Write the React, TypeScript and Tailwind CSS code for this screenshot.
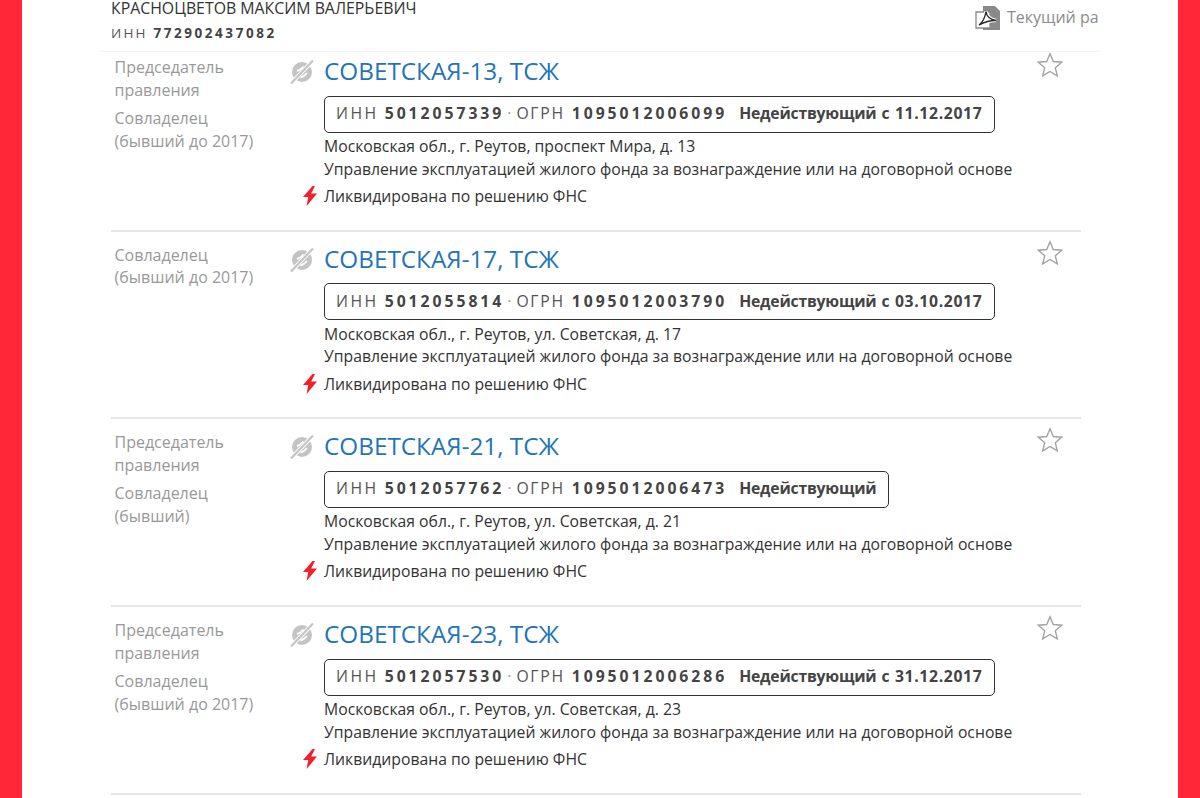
const companies = [
  {
    name: 'СОВЕТСКАЯ-13, ТСЖ',
    height: '-mt-[8px] h-[187.5px]',
    roles: [['Председатель', 'правления'], ['Совладелец', '(бывший до 2017)']],
    inn: '5012057339',
    ogrn: '1095012006099',
    date: 'с 11.12.2017',
    address: 'Московская обл., г. Реутов, проспект Мира, д. 13',
  },
  {
    name: 'СОВЕТСКАЯ-17, ТСЖ',
    height: 'h-[187.5px]',
    roles: [['Совладелец', '(бывший до 2017)']],
    inn: '5012055814',
    ogrn: '1095012003790',
    date: 'с 03.10.2017',
    address: 'Московская обл., г. Реутов, ул. Советская, д. 17',
  },
  {
    name: 'СОВЕТСКАЯ-21, ТСЖ',
    height: 'h-[188px]',
    roles: [['Председатель', 'правления'], ['Совладелец', '(бывший)']],
    inn: '5012057762',
    ogrn: '1095012006473',
    date: '',
    address: 'Московская обл., г. Реутов, ул. Советская, д. 21',
  },
  {
    name: 'СОВЕТСКАЯ-23, ТСЖ',
    height: 'h-[188px]',
    roles: [['Председатель', 'правления'], ['Совладелец', '(бывший до 2017)']],
    inn: '5012057530',
    ogrn: '1095012006286',
    date: 'с 31.12.2017',
    address: 'Московская обл., г. Реутов, ул. Советская, д. 23',
  },
]

function InactiveIcon() {
  return (
    <svg width="24" height="24" viewBox="0 0 24 24" className="shrink-0">
      <circle cx="12" cy="12" r="10" fill="#c4c4c4" />
      <path d="M7 11c2.500-.5 4.500-2 6.500-4.500M10.500 17.500c2.500-.5 4.500-2 6.500-4.500" stroke="#fff" strokeWidth="1.800" fill="none" />
      <path d="M1.500 23L22.500 1" stroke="#fff" strokeWidth="4" />
      <path d="M1 23.500L23 .5" stroke="#c4c4c4" strokeWidth="2.200" />
    </svg>
  )
}

function BoltIcon() {
  return (
    <svg width="16" height="20" viewBox="0 0 16 20" className="shrink-0">
      <path d="M10.500 0L1 11h5.200L4.600 20 15 7.600H9.200L13 0z" fill="#f0202c" />
    </svg>
  )
}

function StarIcon() {
  return (
    <svg width="26" height="25" viewBox="0 0 26 25">
      <path d="M13 1.800l3.300 7.700 8.400.7-6.400 5.500 2 8.200L13 19.500l-7.300 4.400 2-8.200-6.400-5.500 8.400-.7z" fill="none" stroke="#a3a3a3" strokeWidth="1.400" />
    </svg>
  )
}

function PdfIcon() {
  return (
    <svg width="26" height="26" viewBox="0 0 26 26" className="shrink-0">
      <path d="M8 1h12l5 5v19H8z" fill="#8a8a8a" />
      <path d="M1 7h14v16H1z" fill="#fff" stroke="#8a8a8a" strokeWidth="1.300" />
      <path d="M11 6.500c-.8 5-3.500 11-7 13.500 3-1.500 9-5 17-4.500-5.500-1-9.500-4-10-9z" fill="none" stroke="#fff" strokeWidth="3.400" />
      <path d="M11 6.500c-.8 5-3.500 11-7 13.500 3-1.500 9-5 17-4.500-5.500-1-9.500-4-10-9z" fill="none" stroke="#2b2b2b" strokeWidth="1.400" />
    </svg>
  )
}

function CompanyRow({ c }: { c: (typeof companies)[number] }) {
  return (
    <div className={`relative flex border-b-2 border-[#e6e6e6] ml-[11px] w-[970px] ${c.height}`}>
      <div className="w-[177px] shrink-0 pl-[3.5px] pt-[12px] text-[16px] leading-[22.5px] text-[#999999]">
        {c.roles.map((lines, i) => (
          <div key={i} className="mb-[6px]">
            {lines.map(l => <div key={l}>{l}</div>)}
          </div>
        ))}
      </div>
      <div className="w-[36px] shrink-0 pt-[16px] pl-[2px]">
        <InactiveIcon />
      </div>
      <div className="flex-1 min-w-0">
        <div className="pt-[9px] text-[24.3px] leading-[36px] text-[#1f75b8]">{c.name}</div>
        <div className="mt-[6.5px] inline-flex items-center h-[37px] pl-[11px] pr-[12px] border border-[#333333] rounded-[5px] text-[15.75px] text-[#555555] whitespace-nowrap">
          <span className="tracking-[2.5px]">ИНН</span>
          <b className="ml-[6px] tracking-[2.95px] font-bold text-[#444444]">{c.inn}</b>
          <span className="ml-[3px] mr-[5px] text-[#999999]">·</span>
          <span className="tracking-[1.7px]">ОГРН</span>
          <b className="ml-[7px] tracking-[2.95px] font-bold text-[#444444]">{c.ogrn}</b>
          <b className="ml-[12px] tracking-[-0.22px] font-bold text-[#444444]">Недействующий</b>
          {c.date && <b className="ml-[5px] tracking-[0.64px] font-bold text-[#444444]">{c.date}</b>}
        </div>
        <div className="mt-[2.5px] text-[15.75px] leading-[22.5px] text-[#333333]">{c.address}</div>
        <div className="text-[15.75px] leading-[22.5px] text-[#333333] whitespace-nowrap">Управление эксплуатацией жилого фонда за вознаграждение или на договорной основе</div>
        <div className="relative mt-[5px] text-[15.75px] leading-[22.5px] text-[#333333]">
          <span className="absolute -left-[22px] top-[1px]"><BoltIcon /></span>
          Ликвидирована по решению ФНС
        </div>
      </div>
      <div className="absolute right-[18px] top-[8px]"><StarIcon /></div>
    </div>
  )
}

export default function App() {
  return (
    <div className="h-[798px] overflow-hidden bg-[#ff2738] px-[22px]" style={{ fontFamily: '"Open Sans", sans-serif' }}>
      <div className="h-full bg-white pl-[78px] pr-[78px]">
        <div className="relative z-10 flex justify-between h-[52px] border-b border-[#f2f2f2]">
          <div className="pl-[11px]">
            <div className="pt-[1px] text-[15.85px] leading-[14px] text-[#333333]">КРАСНОЦВЕТОВ МАКСИМ ВАЛЕРЬЕВИЧ</div>
            <div className="mt-[11px] text-[13.5px] leading-[14px] tracking-[2.2px] text-[#555555]">
              ИНН <b className="text-[#444444] tracking-[2.55px]">772902437082</b>
            </div>
          </div>
          <div className="flex items-start pt-[5px] w-[125px] shrink-0 whitespace-nowrap overflow-hidden text-[16px] leading-[24px] text-[#8c8c8c]">
            <PdfIcon />
            <span className="ml-[6px]">Текущий ра</span>
          </div>
        </div>
        {companies.map(c => <CompanyRow key={c.name} c={c} />)}
      </div>
    </div>
  )
}
